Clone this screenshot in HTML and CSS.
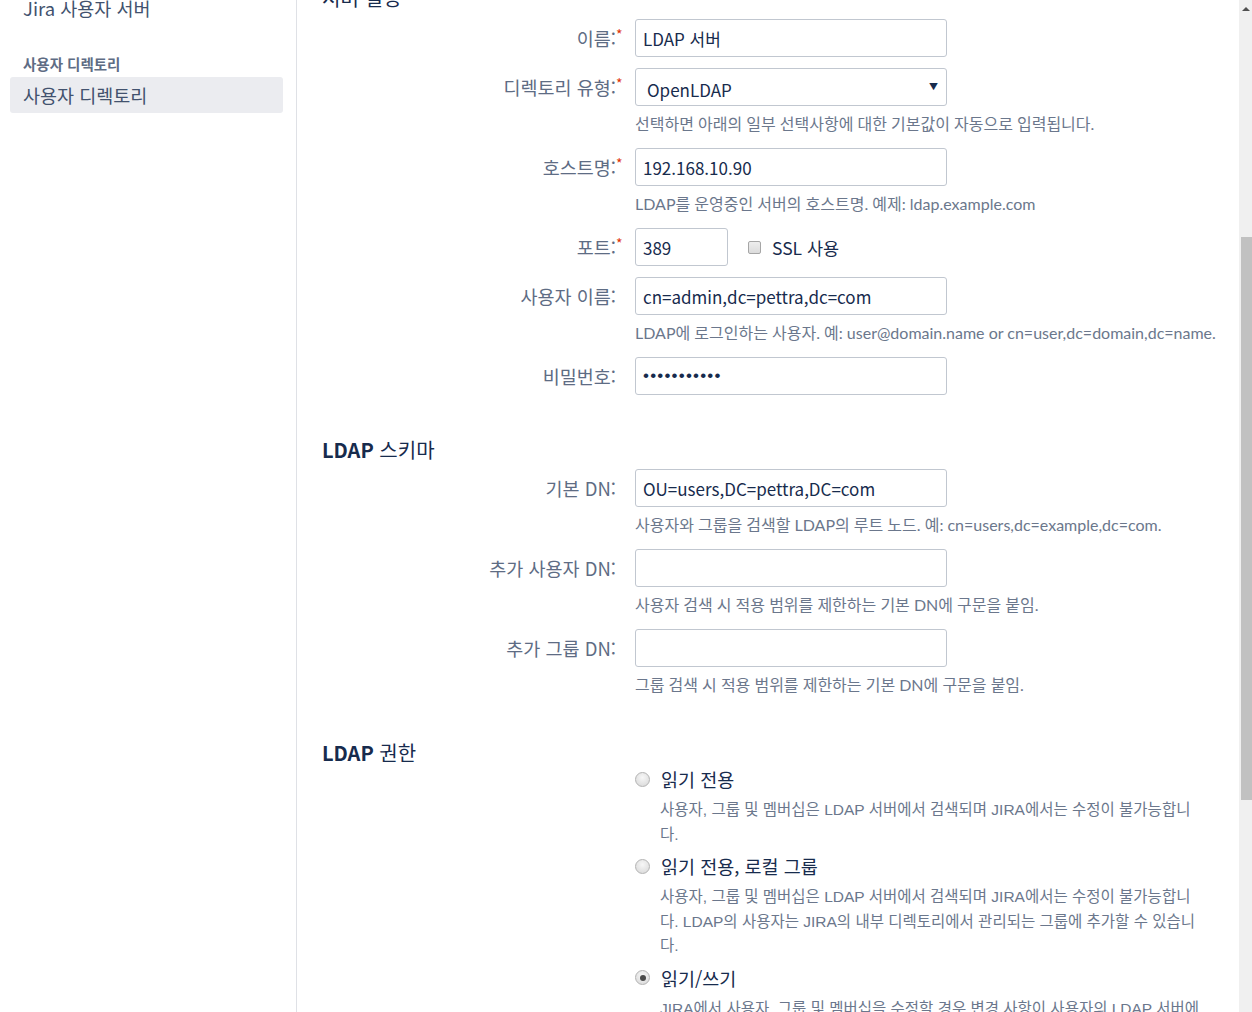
FILE: index.html
```html
<!DOCTYPE html>
<html lang="ko">
<head>
<meta charset="utf-8">
<title>사용자 디렉토리</title>
<link rel="stylesheet" href="styles.css">
</head>
<body>
<div class="app">
  <div class="page">
    <aside class="sidebar">
      <nav class="nav">
        <a class="nav-item">Jira 사용자 서버</a>
        <h3 class="nav-heading">사용자 디렉토리</h3>
        <a class="nav-item selected">사용자 디렉토리</a>
      </nav>
    </aside>
    <main class="content">
      <form class="form">
        <section class="section first">
          <h2 class="section-title">서버 설정</h2>
          <div class="row">
            <label class="label">이름:<span class="req">*</span></label>
            <div class="field"><input class="text" type="text" value="LDAP 서버"></div>
          </div>
          <div class="row">
            <label class="label">디렉토리 유형:<span class="req">*</span></label>
            <div class="field">
              <div class="select-wrap">
                <select class="select"><option>OpenLDAP</option></select>
                <span class="select-arrow">▼</span>
              </div>
              <div class="desc">선택하면 아래의 일부 선택사항에 대한 기본값이 자동으로 입력됩니다.</div>
            </div>
          </div>
          <div class="row">
            <label class="label">호스트명:<span class="req">*</span></label>
            <div class="field">
              <input class="text" type="text" value="192.168.10.90">
              <div class="desc">LDAP를 운영중인 서버의 호스트명. 예제: ldap.example.com</div>
            </div>
          </div>
          <div class="row">
            <label class="label">포트:<span class="req">*</span></label>
            <div class="field port-field">
              <input class="text port" type="text" value="389">
              <label class="check"><span class="checkbox"></span>SSL 사용</label>
            </div>
          </div>
          <div class="row">
            <label class="label">사용자 이름:</label>
            <div class="field">
              <input class="text" type="text" value="cn=admin,dc=pettra,dc=com">
              <div class="desc">LDAP에 로그인하는 사용자. 예: user@domain.name or cn=user,dc=domain,dc=name.</div>
            </div>
          </div>
          <div class="row">
            <label class="label">비밀번호:</label>
            <div class="field"><input class="text password" type="password" value="abcdefghijk"></div>
          </div>
        </section>

        <section class="section">
          <h2 class="section-title"><span class="term">LDAP</span> 스키마</h2>
          <div class="row">
            <label class="label">기본 DN:</label>
            <div class="field">
              <input class="text" type="text" value="OU=users,DC=pettra,DC=com">
              <div class="desc">사용자와 그룹을 검색할 LDAP의 루트 노드. 예: cn=users,dc=example,dc=com.</div>
            </div>
          </div>
          <div class="row">
            <label class="label">추가 사용자 DN:</label>
            <div class="field">
              <input class="text" type="text" value="">
              <div class="desc">사용자 검색 시 적용 범위를 제한하는 기본 DN에 구문을 붙임.</div>
            </div>
          </div>
          <div class="row">
            <label class="label">추가 그룹 DN:</label>
            <div class="field">
              <input class="text" type="text" value="">
              <div class="desc">그룹 검색 시 적용 범위를 제한하는 기본 DN에 구문을 붙임.</div>
            </div>
          </div>
        </section>

        <section class="section perms">
          <h2 class="section-title"><span class="term">LDAP</span> 권한</h2>
          <div class="row">
            <div class="label"></div>
            <div class="field radios">
              <div class="radio-item">
                <label class="radio-label"><span class="radio"></span>읽기 전용</label>
                <div class="radio-desc">사용자, 그룹 및 멤버십은 LDAP 서버에서 검색되며 JIRA에서는 수정이 불가능합니다.</div>
              </div>
              <div class="radio-item">
                <label class="radio-label"><span class="radio"></span>읽기 전용, 로컬 그룹</label>
                <div class="radio-desc">사용자, 그룹 및 멤버십은 LDAP 서버에서 검색되며 JIRA에서는 수정이 불가능합니다. LDAP의 사용자는 JIRA의 내부 디렉토리에서 관리되는 그룹에 추가할 수 있습니다.</div>
              </div>
              <div class="radio-item">
                <label class="radio-label"><span class="radio checked"></span>읽기/쓰기</label>
                <div class="radio-desc">JIRA에서 사용자, 그룹 및 멤버십을 수정할 경우 변경 사항이 사용자의 LDAP 서버에 직접 반영됩니다.</div>
              </div>
            </div>
          </div>
        </section>
      </form>
    </main>
  </div>
  <div class="scrollbar">
    <span class="scroll-arrow"></span>
    <div class="scroll-thumb"></div>
  </div>
</div>
</body>
</html>
```

FILE: styles.css
```css
* { box-sizing: border-box; }

html, body {
  margin: 0;
  padding: 0;
  background: #ffffff;
}

body {
  font-family: "Noto Sans CJK KR", "Noto Sans", sans-serif;
  color: #172b4d;
}

.app {
  display: flex;
  width: 1252px;
  height: 1012px;
  overflow: hidden;
}

/* page is shown scrolled down by 40px */
.page {
  flex: 1;
  min-width: 0;
  min-height: 1060px;
  display: flex;
  align-self: flex-start;
  margin-top: -40px;
}

/* Sidebar */
.sidebar {
  width: 297px;
  flex: none;
  border-right: 1px solid #dfe1e6;
  padding: 30px 13px 0 10px;
}

.nav {
  display: flex;
  flex-direction: column;
}

.nav-item {
  display: block;
  height: 36px;
  line-height: 36px;
  padding-left: 13px;
  font-size: 18.5px;
  color: #42526e;
  border-radius: 3px;
}

.nav-item.selected {
  background: #ebecf0;
}

.nav-heading {
  margin: 28px 0 3px;
  padding-left: 13px;
  font-size: 14.5px;
  line-height: 20px;
  font-weight: 700;
  color: #5e6c84;
}

/* Content */
.content {
  flex: 1;
  min-width: 0;
  padding: 24px 32px 0 25px;
}

.form {
  margin: 0;
}

.section {
  margin-top: 41px;
}

.section.first {
  margin-top: 0;
}

.section-title {
  margin: 0 0 5px;
  font-size: 20px;
  line-height: 28px;
  font-weight: 400;
  color: #172b4d;
}

.section-title .term {
  font-weight: 700;
}

.section.first .section-title {
  margin-bottom: 7px;
}

.section.perms .section-title {
  margin-bottom: 0;
}

.row {
  display: grid;
  grid-template-columns: 294px minmax(0, 1fr);
  column-gap: 19px;
  margin-bottom: 11px;
}

.label {
  text-align: right;
  font-size: 18.5px;
  line-height: 38px;
  color: #5e6c84;
  white-space: nowrap;
}

.req {
  display: inline-block;
  vertical-align: top;
  margin-right: -7px;
  width: 7px;
  font-size: 14px;
  line-height: 30px;
  color: #de350b;
  text-align: left;
}

.text {
  display: block;
  width: 312px;
  height: 38px;
  padding: 0 7px;
  border: 1px solid #c1c7d0;
  border-radius: 3px;
  background: #ffffff;
  font-family: "Noto Sans CJK KR", "Noto Sans", sans-serif;
  font-size: 17px;
  color: #172b4d;
  outline: none;
}

.text.port {
  width: 93px;
}

.text.password {
  font-family: "Liberation Sans", sans-serif;
  font-size: 17px;
  letter-spacing: 1.2px;
}

.select-wrap {
  position: relative;
  width: 312px;
}

.select {
  display: block;
  width: 312px;
  height: 38px;
  padding: 4px 11px 0;
  border: 1px solid #c1c7d0;
  border-radius: 3px;
  background: #ffffff;
  font-family: "Noto Sans CJK KR", "Noto Sans", sans-serif;
  font-size: 17px;
  color: #172b4d;
  -webkit-appearance: none;
  appearance: none;
  outline: none;
}

.select-arrow {
  position: absolute;
  right: 9px;
  top: 13px;
  font-size: 9px;
  line-height: 12px;
  color: #172b4d;
  pointer-events: none;
}

.desc {
  margin-top: 8px;
  padding-bottom: 3px;
  font-family: "Lato", "Noto Sans CJK KR", sans-serif;
  font-size: 16px;
  line-height: 20px;
  color: #6b778c;
  white-space: nowrap;
}

.port-field {
  display: flex;
  align-items: center;
}

.check {
  display: flex;
  align-items: center;
  margin-left: 20px;
  font-size: 17.5px;
  color: #172b4d;
}

.checkbox {
  width: 13px;
  height: 13px;
  margin-right: 11px;
  border: 1px solid #a6a6a6;
  border-radius: 2px;
  background: linear-gradient(#ededed, #dcdcdc);
}

/* Radios */
.radio-item {
  margin-bottom: 7px;
}

.radio-label {
  display: flex;
  align-items: center;
  font-size: 18.5px;
  line-height: 24px;
  color: #172b4d;
}

.radio {
  width: 15px;
  height: 15px;
  margin-right: 11px;
  border-radius: 50%;
  border: 1px solid #b3b3b3;
  background: radial-gradient(circle at 50% 35%, #f7f7f7, #d6d6d6);
  display: flex;
  align-items: center;
  justify-content: center;
}

.radio.checked::after {
  content: "";
  width: 6px;
  height: 6px;
  border-radius: 50%;
  background: #4a4a4a;
}

.radio-desc {
  margin-top: 7px;
  padding-left: 25px;
  font-family: "Liberation Sans", "Noto Sans CJK KR", sans-serif;
  font-size: 15.5px;
  line-height: 24.5px;
  color: #6b778c;
}

/* Scrollbar of the scrolled window */
.scrollbar {
  width: 13px;
  flex: none;
  background: #f0f0f0;
  display: flex;
  flex-direction: column;
  align-items: flex-end;
}

.scroll-arrow {
  width: 0;
  height: 0;
  margin: 7px 2px 0 0;
  border-left: 4px solid transparent;
  border-right: 4px solid transparent;
  border-bottom: 4px solid #505050;
}

.scroll-thumb {
  width: 11px;
  height: 563px;
  margin-top: 226px;
  background: #c1c1c1;
}
```
